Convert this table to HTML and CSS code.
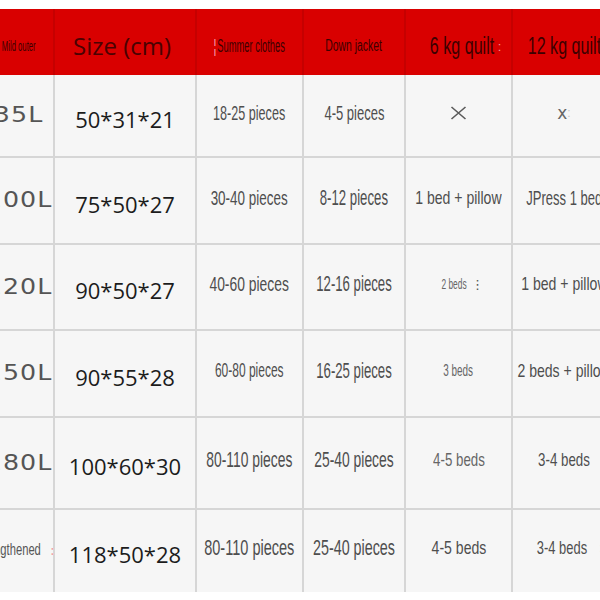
FILE: index.html
```html
<!DOCTYPE html>
<html lang="en">
<head>
<meta charset="utf-8">
<title>Size chart</title>
<link rel="stylesheet" href="styles.css">
</head>
<body>
<div class="sheet">
  <div class="cell head"><span class="cond f14 s55 h-dark">Mild outer</span></div>
  <div class="cell head"><span class="h-size">Size (cm)</span></div>
  <div class="cell head"><span class="cond f18 s52 h-dark"><span class="mark-red">¦</span>Summer clothes</span></div>
  <div class="cell head"><span class="cond f16 s65 h-dark">Down jacket</span></div>
  <div class="cell head"><span class="cond f23 s70 h-dark">6 kg quilt</span><span class="mark mark-pink">:</span></div>
  <div class="cell head last"><span class="cond f23 s70 h-dark">12 kg quilt</span></div>

  <div class="cell vol"><span class="vol-text">35L</span></div>
  <div class="cell dim"><span>50*31*21</span></div>
  <div class="cell"><span class="cond f21 s60">18-25 pieces</span></div>
  <div class="cell"><span class="cond f21 s62">4-5 pieces</span></div>
  <div class="cell"><svg class="xmark" width="17" height="14" viewBox="0 0 17 14"><path d="M1.5 1 L15.5 13 M15.5 1 L1.5 13" stroke="#5a5a5a" stroke-width="1.6" fill="none"/></svg></div>
  <div class="cell last"><span class="small-x">x</span><span class="mark mark-grey">:</span></div>

  <div class="cell vol"><span class="vol-text">100L</span></div>
  <div class="cell dim"><span>75*50*27</span></div>
  <div class="cell"><span class="cond f21 s64">30-40 pieces</span></div>
  <div class="cell"><span class="cond f22 s60">8-12 pieces</span></div>
  <div class="cell"><span class="cond f19 s74">1 bed + pillow</span></div>
  <div class="cell last"><span class="cond f21 s62">JPress 1 bed</span></div>

  <div class="cell vol"><span class="vol-text">120L</span></div>
  <div class="cell dim"><span>90*50*27</span></div>
  <div class="cell"><span class="cond f21 s66">40-60 pieces</span></div>
  <div class="cell"><span class="cond f22 s60">12-16 pieces</span></div>
  <div class="cell"><span class="cond f14 s60 light">2 beds</span><span class="dots">⋮</span></div>
  <div class="cell last"><span class="cond f19 s74">1 bed + pillow</span></div>

  <div class="cell vol"><span class="vol-text">150L</span></div>
  <div class="cell dim"><span>90*55*28</span></div>
  <div class="cell"><span class="cond f20 s60">60-80 pieces</span></div>
  <div class="cell"><span class="cond f22 s60">16-25 pieces</span></div>
  <div class="cell"><span class="cond f16 s62 light">3 beds</span></div>
  <div class="cell last"><span class="cond f19 s74">2 beds + pillow</span></div>

  <div class="cell vol"><span class="vol-text">180L</span></div>
  <div class="cell dim"><span>100*60*30</span></div>
  <div class="cell"><span class="cond f22 s63">80-110 pieces</span></div>
  <div class="cell"><span class="cond f22 s63">25-40 pieces</span></div>
  <div class="cell"><span class="cond f19 s70 light">4-5 beds</span></div>
  <div class="cell last"><span class="cond f19 s70">3-4 beds</span></div>

  <div class="cell vol bottom shift"><span class="cond f16 s70 plain">Lengthened</span><span class="mark mark-pink2">:</span></div>
  <div class="cell dim bottom"><span>118*50*28</span></div>
  <div class="cell bottom"><span class="cond f22 s66">80-110 pieces</span></div>
  <div class="cell bottom"><span class="cond f22 s65">25-40 pieces</span></div>
  <div class="cell bottom"><span class="cond f19 s74">4-5 beds</span></div>
  <div class="cell last bottom"><span class="cond f19 s68">3-4 beds</span><span class="mark mark-grey">:</span></div>
</div>
</body>
</html>
```

FILE: styles.css
```css
html, body {
  margin: 0;
  padding: 0;
  background: #ffffff;
  overflow: hidden;
  width: 600px;
  height: 600px;
}

.sheet {
  margin-top: 9px;
  margin-left: -15px;
  width: 632px;
  display: grid;
  grid-template-columns: 70px 142px 107px 102px 107px 102px;
  grid-template-rows: 66px 83px 87px 86px 87px 92px 82px;
  font-family: "Liberation Sans", Arial, sans-serif;
}

.cell {
  box-sizing: border-box;
  background: #f6f6f6;
  border-right: 2px solid #d6d6d6;
  border-bottom: 2px solid #d6d6d6;
  display: flex;
  align-items: center;
  justify-content: center;
  white-space: nowrap;
  color: #4e4e4e;
  padding-bottom: 6px;
}

.cell.last {
  border-right: none;
  overflow: visible;
}

.cell.bottom {
  border-bottom: none;
}

.cell.head {
  background: #d90000;
  border-right: 2px solid #c60000;
  border-bottom: none;
  padding-top: 8px;
  padding-bottom: 0;
}

.cell.head.last {
  border-right: none;
}

.cond {
  display: inline-block;
  white-space: nowrap;
}

.f14 { font-size: 14px; }
.f15 { font-size: 15px; }
.f16 { font-size: 16px; }
.f18 { font-size: 18px; }
.f19 { font-size: 19px; }
.f20 { font-size: 20px; }
.f21 { font-size: 21px; }
.f22 { font-size: 22px; }
.f23 { font-size: 23px; }

.s52 { transform: scaleX(0.52); }
.s55 { transform: scaleX(0.55); }
.s58 { transform: scaleX(0.58); }
.s60 { transform: scaleX(0.60); }
.s62 { transform: scaleX(0.62); }
.s63 { transform: scaleX(0.63); }
.s64 { transform: scaleX(0.64); }
.s65 { transform: scaleX(0.65); }
.s66 { transform: scaleX(0.66); }
.s68 { transform: scaleX(0.68); }
.s70 { transform: scaleX(0.70); }
.s72 { transform: scaleX(0.72); }
.s74 { transform: scaleX(0.74); }

.h-dark {
  color: #3c0000;
}

.h-size {
  font-family: "Open Sans", "Noto Sans", sans-serif;
  font-size: 24px;
  color: #4a0202;
  padding-bottom: 2px;
  margin-right: 6px;
}

.light {
  color: #666666;
}

.mark {
  display: inline-block;
  font-size: 12px;
  line-height: 1;
}

.mark-red {
  color: #ffd0d0;
  margin-right: 2px;
}

.mark-pink {
  color: #f09a9a;
  margin-left: -10px;
  font-size: 13px;
}

.mark-pink2 {
  color: #f0a0a0;
  margin-left: -4px;
  font-size: 14px;
}

.mark-grey {
  color: #c8c8c8;
}

.vol {
  font-family: "DejaVu Sans", Verdana, sans-serif;
  font-size: 22px;
  color: #555555;
  padding-bottom: 2px;
}

.vol-text {
  display: inline-block;
  letter-spacing: 1px;
  transform: scaleX(1.15);
}

.vol.shift {
  padding-right: 14px;
}

.vol .plain {
  font-family: "Liberation Sans", Arial, sans-serif;
  letter-spacing: 0;
  color: #555555;
}

.dim {
  font-family: "Open Sans", "Noto Sans", sans-serif;
  font-size: 22px;
  color: #1c1c1c;
  padding-top: 6px;
  padding-bottom: 0;
}

.dots {
  font-family: "DejaVu Sans", sans-serif;
  font-size: 13px;
  color: #555555;
  margin-left: -4px;
}

.small-x {
  font-family: "DejaVu Sans", sans-serif;
  font-size: 17px;
  color: #666666;
}

.xmark {
  display: block;
}
```
